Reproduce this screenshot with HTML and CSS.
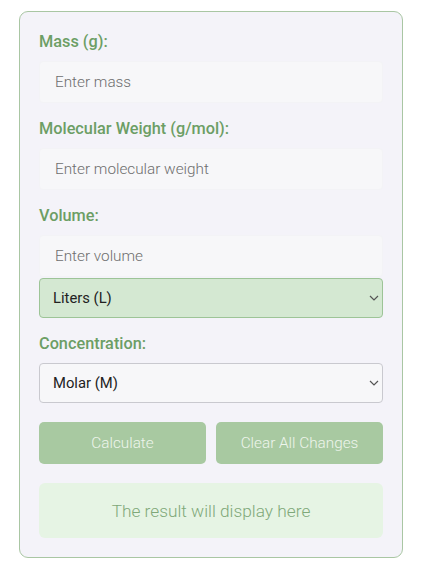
FILE: index.html
```html
<!DOCTYPE html>
<html lang="en">
<head>
<meta charset="utf-8">
<title>Molarity Calculator</title>
<link rel="stylesheet" href="styles.css">
</head>
<body>
<div class="card">
  <div class="group">
    <label class="label" for="mass">Mass (g):</label>
    <input class="field" id="mass" type="text" placeholder="Enter mass">
  </div>
  <div class="group">
    <label class="label" for="mw">Molecular Weight (g/mol):</label>
    <input class="field" id="mw" type="text" placeholder="Enter molecular weight">
  </div>
  <div class="group">
    <label class="label" for="vol">Volume:</label>
    <input class="field" id="vol" type="text" placeholder="Enter volume">
    <div class="select-wrap select-gap">
      <select class="select select-green">
        <option>Liters (L)</option>
        <option>Milliliters (mL)</option>
      </select>
      <svg class="chevron" width="10" height="6" viewBox="0 0 10 6" aria-hidden="true"><path d="M1 1 L5 5 L9 1" fill="none" stroke="#555" stroke-width="1.2"/></svg>
    </div>
  </div>
  <div class="group">
    <label class="label" for="conc">Concentration:</label>
    <div class="select-wrap">
      <select class="select" id="conc">
        <option>Molar (M)</option>
        <option>Millimolar (mM)</option>
      </select>
      <svg class="chevron" width="10" height="6" viewBox="0 0 10 6" aria-hidden="true"><path d="M1 1 L5 5 L9 1" fill="none" stroke="#555" stroke-width="1.2"/></svg>
    </div>
  </div>
  <div class="buttons">
    <button class="btn" type="button">Calculate</button>
    <button class="btn" type="button">Clear All Changes</button>
  </div>
  <div class="result">The result will display here</div>
</div>
</body>
</html>
```

FILE: styles.css
```css
html, body {
  margin: 0;
  padding: 0;
  background: #ffffff;
}
body {
  font-family: Roboto, "Liberation Sans", sans-serif;
  padding-top: 11px;
}
.card {
  box-sizing: border-box;
  width: 384px;
  margin: 0 auto;
  background: #f4f3f9;
  border: 1px solid #a9c6a3;
  border-radius: 9px;
  padding: 19px 19px 19px;
}
.group {
  margin-bottom: 15px;
}
.label {
  display: block;
  font-size: 16.3px;
  font-weight: 500;
  line-height: 22px;
  color: #6c9e65;
  margin-bottom: 8px;
}
.field {
  box-sizing: border-box;
  display: block;
  width: 100%;
  height: 42px;
  padding: 0 15px;
  font-family: inherit;
  font-size: 15.3px;
  font-weight: 300;
  color: #333;
  background: #f7f7f9;
  border: 1px solid #f3f3f6;
  border-radius: 4px;
  outline: none;
}
.field::placeholder {
  color: #6e6e6e;
}
.select-wrap {
  position: relative;
}
.select-gap {
  margin-top: 1px;
}
.select {
  box-sizing: border-box;
  display: block;
  width: 100%;
  height: 40px;
  padding: 0 13px;
  font-family: inherit;
  font-size: 14.8px;
  font-weight: 400;
  color: #222;
  background-color: #f7f7f9;
  border: 1px solid #c9c9cf;
  border-radius: 4px;
  -webkit-appearance: none;
  appearance: none;
  outline: none;
}
.select-green {
  background-color: #d4e8d2;
  border-color: #9dc497;
}
.chevron {
  position: absolute;
  right: 4px;
  top: 17px;
  pointer-events: none;
}
.buttons {
  display: grid;
  grid-template-columns: 1fr 1fr;
  gap: 10px;
  margin-top: 19px;
}
.btn {
  height: 42px;
  font-family: inherit;
  font-size: 15.3px;
  font-weight: 300;
  color: #eef5ec;
  background: #a8c9a1;
  border: none;
  border-radius: 5px;
}
.result {
  margin-top: 19px;
  height: 55px;
  display: flex;
  align-items: center;
  justify-content: center;
  font-size: 17.3px;
  font-weight: 300;
  color: #7fa879;
  background: #e6f4e4;
  border-radius: 6px;
}
```
